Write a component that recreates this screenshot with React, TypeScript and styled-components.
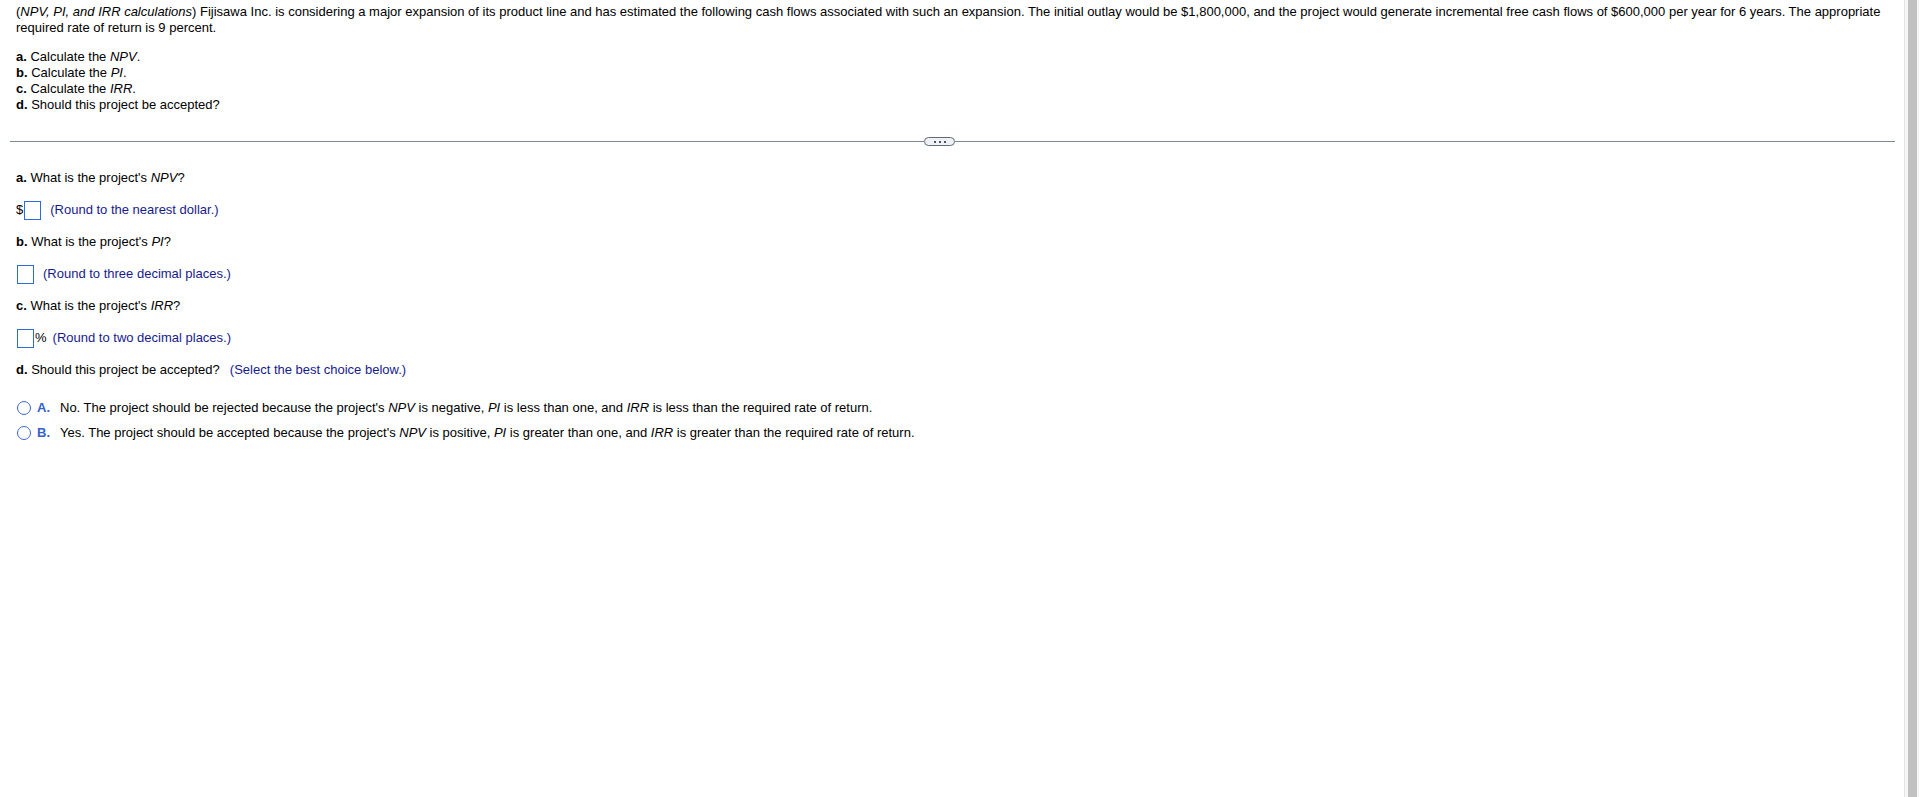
import React from "react";
import styled, { createGlobalStyle } from "styled-components";

const GlobalStyle = createGlobalStyle`
  html, body {
    margin: 0;
    padding: 0;
    background: #ffffff;
    overflow: hidden;
  }
  body {
    font-family: "Liberation Sans", Arial, sans-serif;
    font-size: 13px;
    color: #000000;
  }
`;

const Page = styled.div`
  display: flex;
  height: 100vh;
  width: 100vw;
`;

const Main = styled.main`
  flex: 1;
  min-width: 0;
  display: flex;
  flex-direction: column;
  padding-top: 4px;
`;

const ScrollTrack = styled.div`
  width: 14px;
  flex-shrink: 0;
  display: flex;
  background: #f6f6f6;
  border-left: 1px solid #e4e4e4;
`;

const ScrollThumb = styled.div`
  flex: 1;
  margin: 0 2px 0 3px;
  background: #c1c1c1;
`;

const Section = styled.section`
  padding: 0 16px;
`;

const Paragraph = styled.p`
  margin: 0;
  line-height: 16px;
`;

const TaskList = styled.div`
  margin-top: 13px;
  display: flex;
  flex-direction: column;
`;

const TaskLine = styled.div`
  line-height: 16px;
`;

const Label = styled.b`
  font-weight: bold;
`;

const Em = styled.i`
  font-style: italic;
`;

const DividerRow = styled.div`
  display: flex;
  height: 10px;
  margin: 23px 9px 0 10px;
`;

const DividerLine = styled.div<{ $grow: number }>`
  flex: ${(p) => p.$grow} 1 0;
  height: 1px;
  margin-top: 5px;
  background: #7d8791;
`;

const Pill = styled.div`
  box-sizing: border-box;
  width: 31px;
  height: 9px;
  margin-top: 1px;
  border: 1px solid #5f6c78;
  border-radius: 5px;
  background: #eef2f6;
  display: flex;
  align-items: center;
  justify-content: center;
  gap: 3px;
`;

const Dot = styled.span`
  width: 2px;
  height: 2px;
  background: #4b5661;
`;

const Questions = styled.div`
  margin-top: 22px;
  display: flex;
  flex-direction: column;
  gap: 12px;
`;

const Row = styled.div`
  display: flex;
  align-items: center;
  height: 20px;
  line-height: 16px;
  white-space: nowrap;
`;

const AnswerBox = styled.span`
  box-sizing: border-box;
  display: inline-block;
  width: 17px;
  height: 19px;
  margin: 0 1px;
  border: 1px solid #2f6bd4;
  background: #ffffff;
`;

const Hint = styled.span<{ $gap?: number }>`
  color: #161b8c;
  margin-left: ${(p) => (p.$gap ?? 8)}px;
`;

const Options = styled.div`
  margin-top: 18px;
  display: flex;
  flex-direction: column;
  gap: 5px;
`;

const OptionRow = styled.label`
  display: flex;
  align-items: center;
  height: 20px;
  line-height: 16px;
  white-space: nowrap;
`;

const Radio = styled.span`
  box-sizing: border-box;
  width: 14px;
  height: 14px;
  margin-left: 1px;
  border: 1.5px solid #3a68d6;
  border-radius: 50%;
  background: #ffffff;
  flex-shrink: 0;
`;

const OptionLetter = styled.span`
  width: 23px;
  margin-left: 6px;
  font-weight: bold;
  color: #3562cf;
`;

const App: React.FC = () => {
  return (
    <>
      <GlobalStyle />
      <Page>
        <Main>
          <Section>
            <Paragraph>
              (<Em>NPV, PI, and IRR calculations</Em>) Fijisawa Inc. is considering a major expansion of its
              product line and has estimated the following cash flows associated with such an expansion. The
              initial outlay would be $1,800,000, and the project would generate incremental free cash flows of
              $600,000 per year for 6 years. The appropriate required rate of return is 9 percent.
            </Paragraph>
            <TaskList>
              <TaskLine>
                <Label>a.</Label> Calculate the <Em>NPV</Em>.
              </TaskLine>
              <TaskLine>
                <Label>b.</Label> Calculate the <Em>PI</Em>.
              </TaskLine>
              <TaskLine>
                <Label>c.</Label> Calculate the <Em>IRR</Em>.
              </TaskLine>
              <TaskLine>
                <Label>d.</Label> Should this project be accepted?
              </TaskLine>
            </TaskList>
          </Section>

          <DividerRow>
            <DividerLine $grow={914} />
            <Pill>
              <Dot />
              <Dot />
              <Dot />
            </Pill>
            <DividerLine $grow={940} />
          </DividerRow>

          <Section>
            <Questions>
              <Row>
                <Label>a.</Label>&nbsp;What is the project's&nbsp;<Em>NPV</Em>?
              </Row>
              <Row>
                $<AnswerBox />
                <Hint>(Round to the nearest dollar.)</Hint>
              </Row>
              <Row>
                <Label>b.</Label>&nbsp;What is the project's&nbsp;<Em>PI</Em>?
              </Row>
              <Row>
                <AnswerBox />
                <Hint>(Round to three decimal places.)</Hint>
              </Row>
              <Row>
                <Label>c.</Label>&nbsp;What is the project's&nbsp;<Em>IRR</Em>?
              </Row>
              <Row>
                <AnswerBox />%
                <Hint $gap={6}>(Round to two decimal places.)</Hint>
              </Row>
              <Row>
                <Label>d.</Label>&nbsp;Should this project be accepted?
                <Hint $gap={10}>(Select the best choice below.)</Hint>
              </Row>
            </Questions>

            <Options>
              <OptionRow>
                <Radio />
                <OptionLetter>A.</OptionLetter>
                <span>
                  No. The project should be rejected because the project's <Em>NPV</Em> is negative, <Em>PI</Em> is
                  less than one, and <Em>IRR</Em> is less than the required rate of return.
                </span>
              </OptionRow>
              <OptionRow>
                <Radio />
                <OptionLetter>B.</OptionLetter>
                <span>
                  Yes. The project should be accepted because the project's <Em>NPV</Em> is positive, <Em>PI</Em> is
                  greater than one, and <Em>IRR</Em> is greater than the required rate of return.
                </span>
              </OptionRow>
            </Options>
          </Section>
        </Main>
        <ScrollTrack>
          <ScrollThumb />
        </ScrollTrack>
      </Page>
    </>
  );
};

export default App;
